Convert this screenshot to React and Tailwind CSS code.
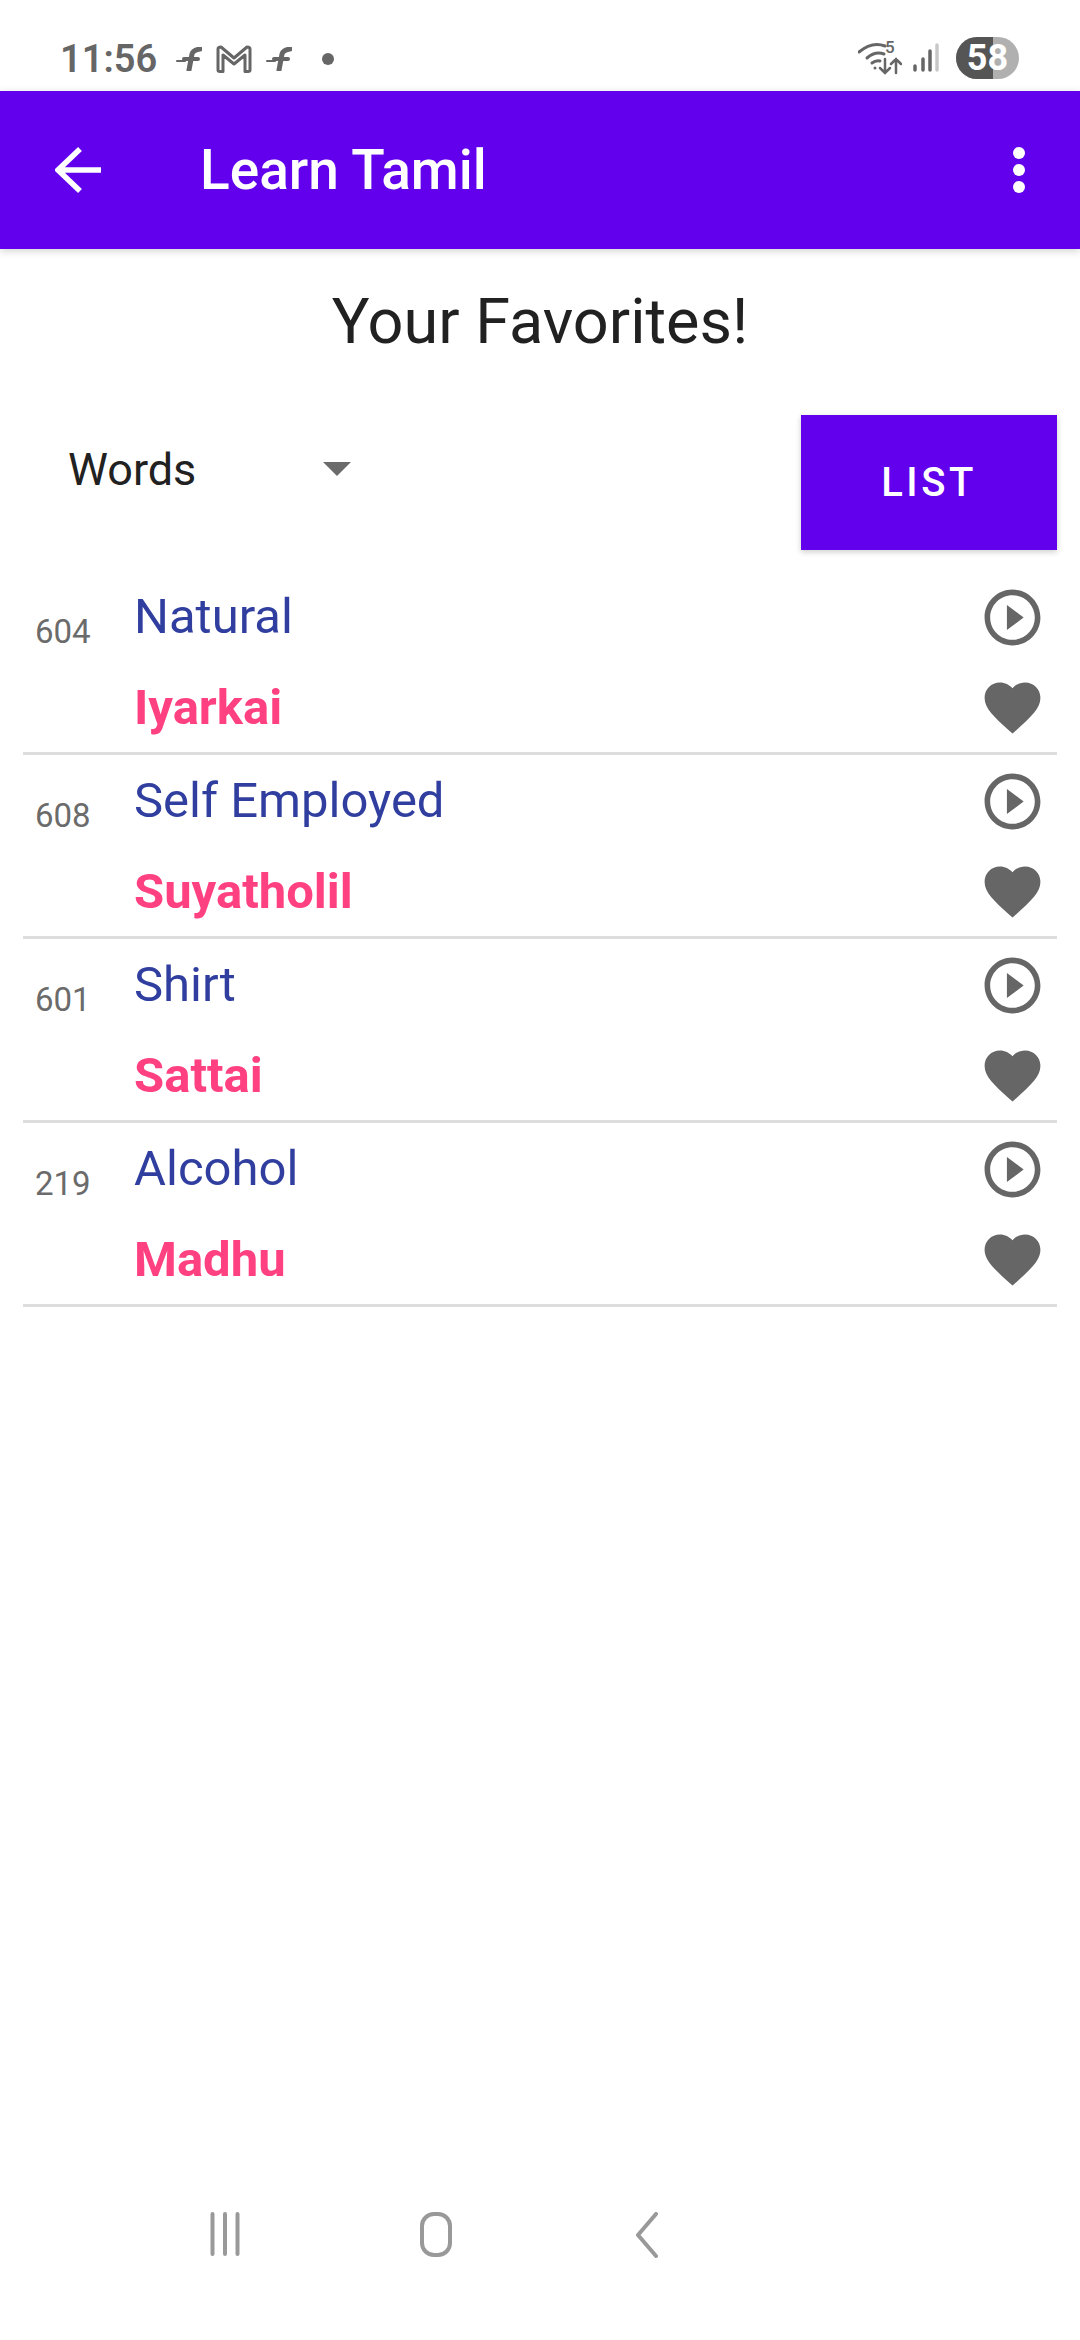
import React from 'react';

const favorites = [
    { id: 604, word: 'Natural', tamil: 'Iyarkai' },
    { id: 608, word: 'Self Employed', tamil: 'Suyatholil' },
    { id: 601, word: 'Shirt', tamil: 'Sattai' },
    { id: 219, word: 'Alcohol', tamil: 'Madhu' },
];

const FlashIcon = () => (
    <svg width="26" height="24" viewBox="0 0 26 24" fill="none" stroke="#666666" strokeLinecap="round">
        <path d="M13 23 L16 7 Q17 3 24 2" strokeWidth="5" />
        <path d="M8 12 H22" strokeWidth="4" />
        <path d="M1 14 H9" strokeWidth="2" />
    </svg>
);

const MailIcon = () => (
    <svg width="36" height="28" viewBox="0 0 36 28" fill="none" stroke="#666666" strokeWidth="3" strokeLinejoin="round">
        <path d="M2 25 V4 Q2 2 5 2 L18 13 L31 2 Q34 2 34 4 V25 Q34 26.5 32 26.5 H29 V10 L18 19 L7 10 V26.5 H4 Q2 26.5 2 25 Z" />
    </svg>
);

const WifiIcon = () => (
    <div className="relative w-[44px] h-[34px]">
        <svg width="44" height="34" viewBox="0 0 44 34" fill="none" stroke="#666666" strokeLinecap="round">
            <path d="M1 11 Q14 0 27 5" strokeWidth="3" />
            <path d="M9 17 Q17 10 26 13" strokeWidth="3" />
            <path d="M14 22 Q18 19 22 20" strokeWidth="3" />
            <circle cx="17" cy="27" r="1.5" fill="#666666" stroke="none" />
            <path d="M27 18 V32 M22 27 L27 32 L32 27" strokeWidth="2.5" />
            <path d="M38 32 V18 M33 23 L38 18 L43 23" strokeWidth="2.5" />
        </svg>
        <span className="absolute left-[27px] top-[-6px] text-[17px] leading-[24px] font-medium text-[#666666]">5</span>
    </div>
);

const SignalIcon = () => (
    <svg width="28" height="30" viewBox="0 0 28 30" fill="none" strokeWidth="3.5" strokeLinecap="round">
        <path d="M3 27 V23" stroke="#666666" />
        <path d="M11 27 V16" stroke="#666666" />
        <path d="M18 27 V8" stroke="#666666" />
        <path d="M25 27 V2" stroke="#c8c8c8" />
    </svg>
);

const PlayIcon = () => (
    <svg width="67" height="67" viewBox="0 0 24 24" fill="#666666">
        <path d="M10 16.5l6-4.5-6-4.5v9zM12 2C6.48 2 2 6.48 2 12s4.48 10 10 10 10-4.48 10-10S17.52 2 12 2zm0 18c-4.41 0-8-3.59-8-8s3.59-8 8-8 8 3.59 8 8-3.59 8-8 8z" />
    </svg>
);

const HeartIcon = () => (
    <svg width="67" height="67" viewBox="0 0 24 24" fill="#666666">
        <path d="M12 21.35l-1.45-1.32C5.4 15.36 2 12.28 2 8.5 2 5.42 4.42 3 7.5 3c1.74 0 3.41.81 4.5 2.09C13.09 3.81 14.76 3 16.5 3 19.58 3 22 5.42 22 8.5c0 3.78-3.4 6.86-8.55 11.54L12 21.35z" />
    </svg>
);

const FavoriteRow = ({ item }) => (
    <div className="h-[184px] border-b-[3px] border-[#dedede] flex">
        <div className="w-[111px] pl-[12px] pt-[41px] text-[33px] leading-[40px] text-[#6b6b6b]">{item.id}</div>
        <div className="flex-1 flex flex-col">
            <div className="h-[92px] flex items-center text-[49px] leading-[60px] text-[#303f9f]">{item.word}</div>
            <div className="h-[89px] flex items-center text-[49px] leading-[60px] font-bold text-[#ff4081]">{item.tamil}</div>
        </div>
        <div className="w-[90px] flex flex-col items-center">
            <div className="h-[92px] flex items-center"><PlayIcon /></div>
            <div className="h-[89px] flex items-center"><HeartIcon /></div>
        </div>
    </div>
);

const App = () => {
    return (
        <div className="w-[1080px] h-[2340px] bg-white flex flex-col overflow-hidden font-['Roboto',sans-serif]">
            <div className="h-[91px] pl-[60px] pr-[61px] pt-[37px] flex items-start">
                <span className="text-[38px] leading-[44px] font-semibold text-[#666666] w-[116px]">11:56</span>
                <div className="flex items-center gap-[14px] mt-[8px]">
                    <FlashIcon />
                    <MailIcon />
                    <FlashIcon />
                    <div className="ml-[16px] w-[12px] h-[12px] rounded-full bg-[#666666]" />
                </div>
                <div className="ml-auto flex items-center gap-[10px]">
                    <WifiIcon />
                    <SignalIcon />
                    <div className="ml-[6px] w-[63px] h-[42px] rounded-full overflow-hidden relative flex bg-[#b0b0b0]">
                        <div className="w-[37px] bg-[#555555]" />
                        <span className="absolute inset-0 flex items-center justify-center text-[36px] leading-[42px] font-bold text-white">58</span>
                    </div>
                </div>
            </div>

            <div className="h-[158px] bg-[#6200ee] shadow-[0_2px_8px_rgba(0,0,0,0.18)] flex items-center pl-[55px] pr-[55px]">
                <svg width="46" height="46" viewBox="0 0 46 46" fill="none" stroke="white" strokeWidth="5.5">
                    <path d="M46 23 H3 M25 2 L3 23 L25 44" />
                </svg>
                <span className="ml-[99px] text-[55px] leading-[64px] font-medium text-white">Learn Tamil</span>
                <div className="ml-auto flex flex-col gap-[5px]">
                    <div className="w-[12px] h-[12px] rounded-full bg-white" />
                    <div className="w-[12px] h-[12px] rounded-full bg-white" />
                    <div className="w-[12px] h-[12px] rounded-full bg-white" />
                </div>
            </div>

            <h1 className="mt-[33px] text-center text-[63px] leading-[80px] font-normal text-[#212121]">Your Favorites!</h1>

            <div className="mt-[53px] ml-[68px] mr-[23px] h-[135px] flex">
                <span className="mt-[29px] text-[45px] leading-[52px] text-[#212121] w-[255px]">Words</span>
                <svg className="mt-[47px]" width="28" height="14" viewBox="0 0 28 14" fill="#6b6b6b">
                    <path d="M0 0 H28 L14 14 Z" />
                </svg>
                <button className="ml-auto w-[256px] h-[135px] bg-[#6200ee] shadow-[0_2px_6px_rgba(0,0,0,0.2)] text-[40px] font-medium tracking-[3.5px] text-white">LIST</button>
            </div>

            <div className="mt-[21px] mx-[23px] flex flex-col">
                {favorites.map((item) => (
                    <FavoriteRow key={item.id} item={item} />
                ))}
            </div>

            <div className="mt-auto h-[86px] pl-[119px] mb-[42px] flex items-start">
                <div className="w-[211px] flex justify-center">
                    <svg width="32" height="44" viewBox="0 0 32 44" fill="none" stroke="#999999" strokeWidth="4" strokeLinecap="round">
                        <path d="M3.5 2 V42 M16 2 V42 M28.5 2 V42" />
                    </svg>
                </div>
                <div className="w-[211px] flex justify-center">
                    <div className="w-[32px] h-[45px] border-[4px] border-[#999999] rounded-[14px]" />
                </div>
                <div className="w-[211px] flex justify-center">
                    <svg width="22" height="46" viewBox="0 0 22 46" fill="none" stroke="#999999" strokeWidth="4" strokeLinecap="round" strokeLinejoin="round">
                        <path d="M20 2 L2 23 L20 44" />
                    </svg>
                </div>
            </div>
        </div>
    );
};

export default App;
